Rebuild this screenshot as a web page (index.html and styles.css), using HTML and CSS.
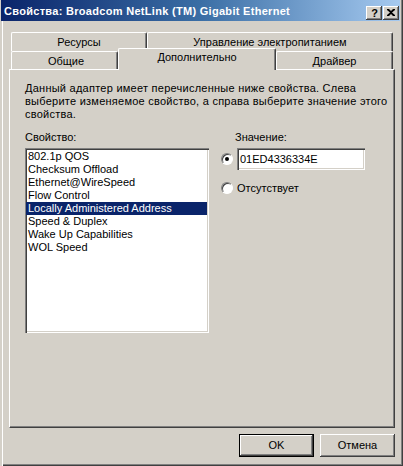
FILE: index.html
```html
<!DOCTYPE html>
<html>
<head>
<meta charset="utf-8">
<link rel="stylesheet" href="styles.css">
</head>
<body>
<div class="window">
  <div class="titlebar">
    <span class="title">Свойства: Broadcom NetLink (TM) Gigabit Ethernet</span>
    <div class="caption-btns">
      <span class="cbtn help">?</span>
      <span class="cbtn close"><svg width="8" height="7" viewBox="0 0 8 7"><path d="M0 0h2l2 2 2-2h2v1L5 3.5 8 6v1H6L4 5 2 7H0V6l3-2.5L0 1z" fill="#000"/></svg></span>
    </div>
  </div>
  <div class="tabs">
    <div class="tabrow back">
      <div class="tab t-res">Ресурсы</div>
      <div class="tab t-pow">Управление электропитанием</div>
    </div>
    <div class="tabrow front">
      <div class="tab t-gen">Общие</div>
      <div class="tab t-adv sel">Дополнительно</div>
      <div class="tab t-drv">Драйвер</div>
    </div>
  </div>
  <div class="panel">
    <p class="desc">Данный адаптер имеет перечисленные ниже свойства. Слева<br>выберите изменяемое свойство, а справа выберите значение этого<br>свойства.</p>
    <div class="cols">
      <div class="col-left">
        <div class="label">Свойство:</div>
        <ul class="list">
          <li>802.1p QOS</li>
          <li>Checksum Offload</li>
          <li>Ethernet@WireSpeed</li>
          <li>Flow Control</li>
          <li class="selected">Locally Administered Address</li>
          <li>Speed &amp; Duplex</li>
          <li>Wake Up Capabilities</li>
          <li>WOL Speed</li>
        </ul>
      </div>
      <div class="col-right">
        <div class="label value-label">Значение:</div>
        <div class="opt opt-value">
          <span class="radio checked"></span>
          <div class="edit">01ED4336334E</div>
        </div>
        <div class="opt opt-none">
          <span class="radio"></span>
          <span class="opt-text">Отсутствует</span>
        </div>
      </div>
    </div>
  </div>
  <div class="buttons">
    <div class="btn default">OK</div>
    <div class="btn">Отмена</div>
  </div>
</div>
</body>
</html>
```

FILE: styles.css
```css
html, body {
  margin: 0;
  padding: 0;
  background: #D4D0C8;
}
body {
  font-family: "Liberation Sans", Arial, sans-serif;
  font-size: 11px;
  color: #000;
}
.window {
  width: 403px;
  height: 466px;
  box-sizing: border-box;
  background: #D4D0C8;
  overflow: hidden;
  box-shadow: inset 2px 0 0 #D4D0C8, inset 3px 0 0 #fff,
              inset -1px -1px 0 #404040, inset -2px -2px 0 #808080;
}
.titlebar {
  margin: 0 3px 0 1px;
  height: 21px;
  display: flex;
  align-items: center;
  justify-content: space-between;
  background: linear-gradient(to right, #0A246A 0%, #3A6EA5 50%, #A6CAF0 100%);
  padding: 0 1px 0 3px;
  box-sizing: border-box;
}
.title {
  color: #fff;
  font-weight: bold;
  font-size: 11px;
  white-space: nowrap;
  letter-spacing: 0.3px;
}
.caption-btns {
  display: flex;
  gap: 1px;
  margin-top: 4px;
}
.cbtn {
  width: 16px;
  height: 14px;
  box-sizing: border-box;
  background: #D4D0C8;
  box-shadow: inset -1px -1px 0 #404040, inset 1px 1px 0 #fff,
              inset -2px -2px 0 #808080, inset 2px 2px 0 #D4D0C8;
  display: flex;
  align-items: center;
  justify-content: center;
  font-weight: bold;
  font-size: 11px;
  line-height: 14px;
}
.cbtn.help { padding-left: 1px; }
.cbtn.close svg { display: block; }
.tabs {
  margin-top: 11px;
  padding-left: 11px;
}
.tabrow {
  display: flex;
  align-items: flex-start;
}
.tab {
  box-sizing: border-box;
  background: #D4D0C8;
  border-left: 1px solid #fff;
  border-top: 1px solid #fff;
  border-right: 1px solid #404040;
  box-shadow: inset -1px 0 0 #808080;
  border-radius: 2px 2px 0 0;
  text-align: center;
  white-space: nowrap;
}
.back .tab {
  height: 19px;
  line-height: 19px;
}
.t-res { width: 136px; }
.t-pow { width: 246px; }
.front .tab {
  height: 18px;
  line-height: 18px;
}
.t-gen { width: 107px; padding-left: 3px; }
.t-adv { width: 158px; }
.t-drv { width: 117px; }
.front .tab.sel {
  height: 22px;
  margin-top: -3px;
  margin-bottom: -1px;
  line-height: 16px;
  position: relative;
  z-index: 2;
}
.panel {
  margin-left: 9px;
  width: 386px;
  height: 359px;
  box-sizing: border-box;
  border-top: 1px solid #fff;
  border-left: 1px solid #fff;
  border-right: 1px solid #404040;
  border-bottom: 1px solid #404040;
  box-shadow: inset -1px -1px 0 #808080;
  padding: 12px 15px 0 15px;
  position: relative;
  z-index: 1;
}
.desc {
  margin: 0;
  line-height: 13px;
  white-space: nowrap;
  letter-spacing: 0.25px;
}
.cols {
  display: flex;
  margin-top: 10px;
  gap: 12px;
}
.label {
  line-height: 13px;
  height: 13px;
  margin-bottom: 4px;
}
.col-left { width: 184px; }
.list {
  list-style: none;
  margin: 0;
  padding: 2px 1px;
  width: 184px;
  height: 185px;
  box-sizing: border-box;
  background: #fff;
  box-shadow: inset 1px 1px 0 #808080, inset 2px 2px 0 #404040,
              inset -1px -1px 0 #fff, inset -2px -2px 0 #D4D0C8;
}
.list li {
  height: 13px;
  line-height: 13px;
  padding-left: 2px;
  margin-right: 1px;
  white-space: nowrap;
}
.list li.selected {
  background: #0A246A;
  color: #fff;
}
.col-right {
  display: flex;
  flex-direction: column;
}
.value-label { padding-left: 14px; }
.opt {
  display: flex;
  align-items: center;
  gap: 4px;
}
.radio {
  width: 12px;
  height: 12px;
  box-sizing: border-box;
  border-radius: 50%;
  background: #fff;
  border: 1px solid;
  border-color: #808080 #fff #fff #808080;
  box-shadow: inset 1px 1px 0 #404040;
  display: flex;
  align-items: center;
  justify-content: center;
  flex: none;
}
.radio.checked::after {
  content: "";
  width: 4px;
  height: 4px;
  border-radius: 50%;
  background: #000;
}
.edit {
  width: 128px;
  height: 22px;
  box-sizing: border-box;
  background: #fff;
  padding: 0 3px;
  line-height: 22px;
  box-shadow: inset 1px 1px 0 #808080, inset 2px 2px 0 #404040,
              inset -1px -1px 0 #fff, inset -2px -2px 0 #D4D0C8;
}
.opt-none {
  margin-top: 12px;
}
.buttons {
  display: flex;
  justify-content: flex-end;
  gap: 6px;
  margin-top: 6px;
  padding-right: 8px;
}
.btn {
  width: 75px;
  height: 23px;
  box-sizing: border-box;
  background: #D4D0C8;
  text-align: center;
  line-height: 23px;
  box-shadow: inset -1px -1px 0 #404040, inset 1px 1px 0 #fff,
              inset -2px -2px 0 #808080, inset 2px 2px 0 #D4D0C8;
}
.btn.default {
  border: 1px solid #000;
  line-height: 21px;
}
```
